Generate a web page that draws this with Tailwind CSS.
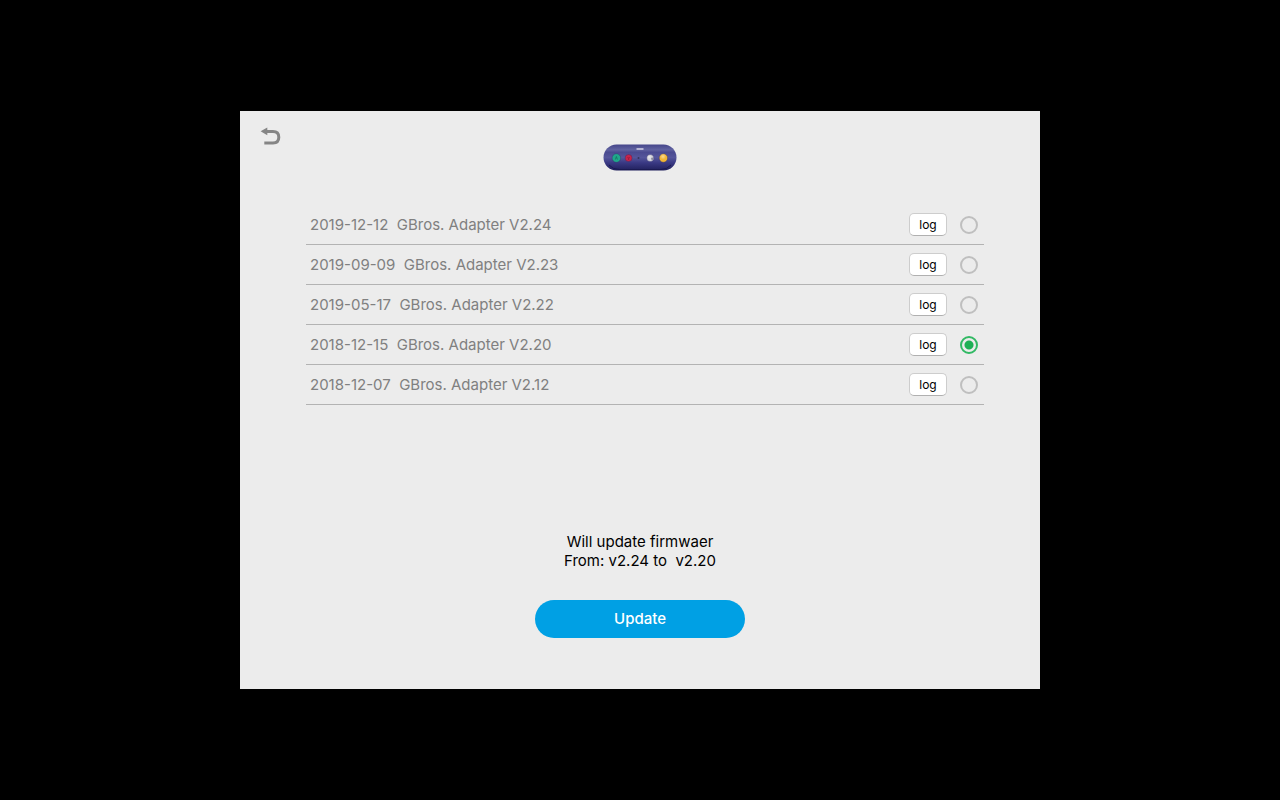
<!DOCTYPE html>
<html lang="en">
<head>
<meta charset="utf-8">
<meta name="viewport" content="width=device-width, initial-scale=1">
<title>Firmware update</title>
<script src="https://cdn.jsdelivr.net/npm/@tailwindcss/browser@4"></script>
</head>
<body class="flex min-h-screen items-center justify-center bg-black font-[Inter,sans-serif]">
<main class="flex w-full max-w-[800px] flex-col bg-[#ececec] pb-[51px]">
  <header class="grid grid-cols-[1fr_auto_1fr] items-start px-5 pt-4">
    <button type="button" aria-label="Back" class="h-5 w-6 justify-self-start">
      <svg viewBox="0 0 24 20" class="h-5 w-6" fill="none">
        <path d="M5 4.500H13Q18.800 4.500 18.800 10.200T13 16H4.300" stroke="#858585" stroke-width="3"/>
        <path d="M0.600 4.300L7.300 0.600V8.200Z" fill="#858585"/>
      </svg>
    </button>
    <svg viewBox="0 0 74 27" class="mt-[17px] h-[27px] w-[74px]" role="img" aria-label="GBros. Adapter">
      <defs>
        <linearGradient id="shell" x1="0" y1="0" x2="0" y2="1">
          <stop offset="0" stop-color="#45458a"/>
          <stop offset=".2" stop-color="#6062a0"/>
          <stop offset=".3" stop-color="#4a4a90"/>
          <stop offset=".5" stop-color="#55569b"/>
          <stop offset=".7" stop-color="#3a3984"/>
          <stop offset="1" stop-color="#20205c"/>
        </linearGradient>
        <radialGradient id="shine"><stop offset="0" stop-color="#fff" stop-opacity=".5"/><stop offset="1" stop-color="#fff" stop-opacity="0"/></radialGradient>
      </defs>
      <rect x=".5" y=".5" width="73" height="26" rx="13" fill="url(#shell)"/>
      <path d="M6 21Q10 25.500 16 25.500H58Q64 25.500 68 21" fill="none" stroke="#1b1a52"/>
      <path d="M33.500 5H40.500" stroke="#b6b5d4" stroke-width="2"/>
      <g stroke="#292663" stroke-opacity=".45" stroke-width=".8">
        <circle cx="13.400" cy="14" r="4.300" fill="#20a78b"/>
        <circle cx="25.600" cy="14" r="3.500" fill="#c8234a"/>
        <circle cx="47.200" cy="14" r="3.500" fill="#d8d8df"/>
        <circle cx="60.400" cy="14" r="4.200" fill="#f2b635"/>
      </g>
      <path d="M12.400 15.500L13.400 12.500L14.400 15.500" fill="none" stroke="#12755f" stroke-width=".8"/>
      <path d="M24.600 13L25.600 14.500L26.600 13M25.600 14.500V16" fill="none" stroke="#8e1737" stroke-width=".7"/>
      <circle cx="35.500" cy="14" r="1" fill="#33335f"/>
      <circle cx="49.300" cy="14.800" r="1.200" fill="#88889c"/>
      <circle cx="46.200" cy="13" r="2" fill="url(#shine)"/>
      <circle cx="60" cy="12.500" r="3" fill="url(#shine)"/>
    </svg>
  </header>

  <ul class="mt-[34px] mr-14 ml-[66px] text-[15px] text-[#808080]">
    <li class="flex h-10 items-center border-b border-[#b3b3b3] pr-1.5 pl-1">
      <label for="v224" class="grow pt-0.5 whitespace-pre">2019-12-12  GBros. Adapter V2.24</label>
      <button type="button" class="mr-[13px] h-[23px] w-[38px] rounded-[5px] border border-[#cdcdcd] border-b-[#b0b0b0] bg-white text-xs leading-5 text-black">log</button>
      <input id="v224" name="version" type="radio" class="size-[18px] appearance-none rounded-full border-2 border-[#bfbfbf] checked:border-[#32b964] checked:bg-[radial-gradient(circle,#1eb055_4px,transparent_5px)]">
    </li>
    <li class="flex h-10 items-center border-b border-[#b3b3b3] pr-1.5 pl-1">
      <label for="v223" class="grow pt-0.5 whitespace-pre">2019-09-09  GBros. Adapter V2.23</label>
      <button type="button" class="mr-[13px] h-[23px] w-[38px] rounded-[5px] border border-[#cdcdcd] border-b-[#b0b0b0] bg-white text-xs leading-5 text-black">log</button>
      <input id="v223" name="version" type="radio" class="size-[18px] appearance-none rounded-full border-2 border-[#bfbfbf] checked:border-[#32b964] checked:bg-[radial-gradient(circle,#1eb055_4px,transparent_5px)]">
    </li>
    <li class="flex h-10 items-center border-b border-[#b3b3b3] pr-1.5 pl-1">
      <label for="v222" class="grow pt-0.5 whitespace-pre">2019-05-17  GBros. Adapter V2.22</label>
      <button type="button" class="mr-[13px] h-[23px] w-[38px] rounded-[5px] border border-[#cdcdcd] border-b-[#b0b0b0] bg-white text-xs leading-5 text-black">log</button>
      <input id="v222" name="version" type="radio" class="size-[18px] appearance-none rounded-full border-2 border-[#bfbfbf] checked:border-[#32b964] checked:bg-[radial-gradient(circle,#1eb055_4px,transparent_5px)]">
    </li>
    <li class="flex h-10 items-center border-b border-[#b3b3b3] pr-1.5 pl-1">
      <label for="v220" class="grow pt-0.5 whitespace-pre">2018-12-15  GBros. Adapter V2.20</label>
      <button type="button" class="mr-[13px] h-[23px] w-[38px] rounded-[5px] border border-[#cdcdcd] border-b-[#b0b0b0] bg-white text-xs leading-5 text-black">log</button>
      <input id="v220" name="version" type="radio" checked class="size-[18px] appearance-none rounded-full border-2 border-[#bfbfbf] checked:border-[#32b964] checked:bg-[radial-gradient(circle,#1eb055_4px,transparent_5px)]">
    </li>
    <li class="flex h-10 items-center border-b border-[#b3b3b3] pr-1.5 pl-1">
      <label for="v212" class="grow pt-0.5 whitespace-pre">2018-12-07  GBros. Adapter V2.12</label>
      <button type="button" class="mr-[13px] h-[23px] w-[38px] rounded-[5px] border border-[#cdcdcd] border-b-[#b0b0b0] bg-white text-xs leading-5 text-black">log</button>
      <input id="v212" name="version" type="radio" class="size-[18px] appearance-none rounded-full border-2 border-[#bfbfbf] checked:border-[#32b964] checked:bg-[radial-gradient(circle,#1eb055_4px,transparent_5px)]">
    </li>
  </ul>

  <p class="mt-[127px] text-center text-[15px] leading-[19px] whitespace-pre text-black">Will update firmwaer
From: v2.24 to  v2.20</p>
  <button type="button" class="mt-[30px] h-[38px] w-[210px] self-center rounded-full bg-[#00a0e4] text-[15px] font-medium text-white">Update</button>
</main>
</body>
</html>
